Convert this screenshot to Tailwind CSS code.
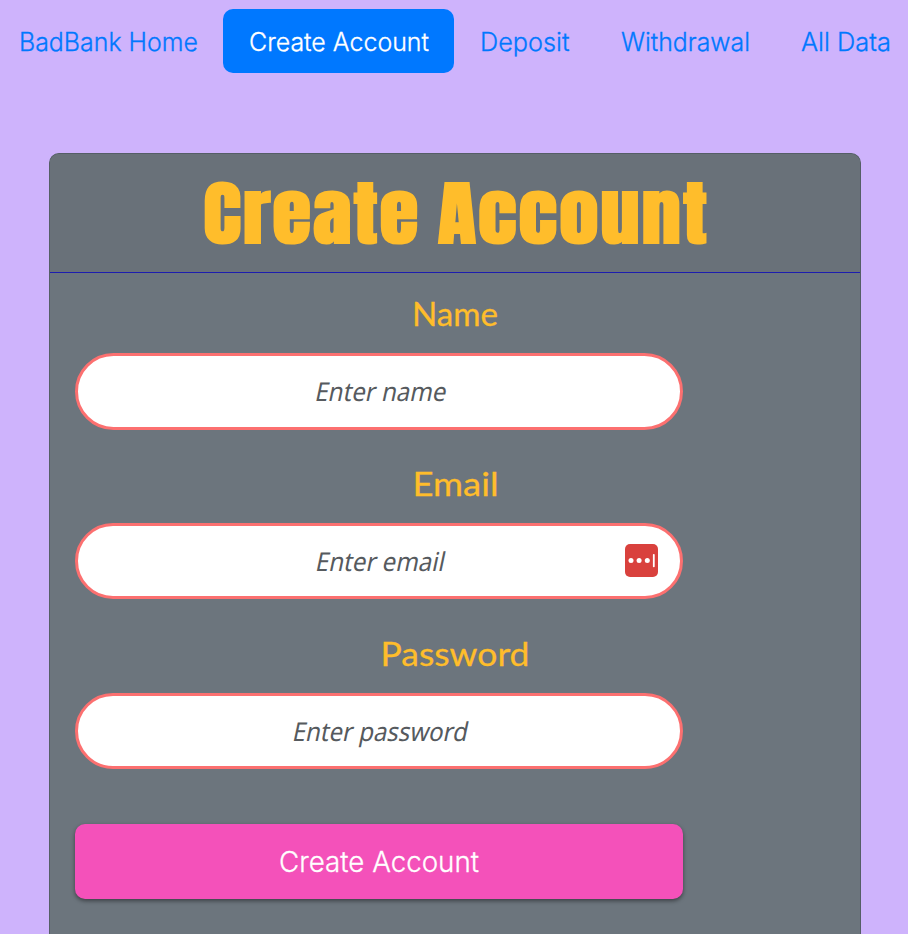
<!DOCTYPE html>
<html lang="en"><head><meta charset="utf-8"><title>BadBank</title>
<script src="https://cdn.jsdelivr.net/npm/@tailwindcss/browser@4"></script></head>
<body class="bg-[#ceb3fc] h-[934px] overflow-hidden font-['Inter',sans-serif]">
<nav class="flex pt-[9px] h-[73px] pl-[19px] text-[25.5px] font-light text-[#0078ff] whitespace-nowrap">
<a class="w-[204px]"><svg class="block w-full h-16" fill="currentColor" stroke="currentColor" stroke-width="0.3"><text x="0" y="42" textLength="179" lengthAdjust="spacingAndGlyphs">BadBank Home</text></svg></a>
<a class="w-[231px] h-16 rounded-[10px] bg-[#0078ff] text-white"><svg class="block w-full h-16" fill="currentColor" stroke="currentColor" stroke-width="0.3"><text x="26" y="42" textLength="180" lengthAdjust="spacingAndGlyphs">Create Account</text></svg></a>
<a class="w-[141px] pl-[26px]"><svg class="block w-full h-16" fill="currentColor" stroke="currentColor" stroke-width="0.3"><text x="0" y="42" textLength="89.5" lengthAdjust="spacingAndGlyphs">Deposit</text></svg></a>
<a class="w-[180px] pl-[26px]"><svg class="block w-full h-16" fill="currentColor" stroke="currentColor" stroke-width="0.3"><text x="0" y="42" textLength="129" lengthAdjust="spacingAndGlyphs">Withdrawal</text></svg></a>
<a class="w-[133px] pl-[26px]"><svg class="block w-full h-16" fill="currentColor" stroke="currentColor" stroke-width="0.3"><text x="0" y="42" textLength="90" lengthAdjust="spacingAndGlyphs">All Data</text></svg></a>
</nav>
<main class="mt-20 ml-[49px] w-[812px] h-[781px] border border-b-0 border-[#555e66] rounded-t-[10px] bg-[#6c757d] overflow-hidden">
<h1 class="h-[119px] bg-[#697179] border-b border-[#1d1dae] text-[#ffbd2b] font-['Impact','Anton','Roboto',sans-serif] font-bold text-[70px] tracking-[2px]">
<svg class="block w-full h-[118px]" fill="currentColor"><text x="153.5" y="89" textLength="217" lengthAdjust="spacingAndGlyphs">Create</text><text x="388" y="89" textLength="271" lengthAdjust="spacingAndGlyphs">Account</text></svg></h1>
<form class="px-[25px]">
<div class="h-[170px]">
<label class="block h-20 text-[#ffbd2b] font-['Papyrus','Lato',sans-serif] text-[33px]"><svg class="block w-full h-20" fill="currentColor" stroke="currentColor" stroke-width="0.3"><text x="337" y="53" textLength="86" lengthAdjust="spacingAndGlyphs">Name</text></svg></label>
<div class="w-[608px] h-[77px] rounded-full border-[3px] border-[#fc7070] bg-white text-[#565a5e] font-['Noto_Sans',sans-serif] text-[26px]"><svg class="block w-full h-[71px]" fill="currentColor"><text transform="translate(236 45) skewX(-12)" textLength="131" lengthAdjust="spacingAndGlyphs">Enter name</text></svg></div>
</div>
<div class="h-[170px]">
<label class="block h-20 text-[#ffbd2b] font-['Papyrus','Lato',sans-serif] text-[33px]"><svg class="block w-full h-20" fill="currentColor" stroke="currentColor" stroke-width="0.3"><text x="337.5" y="53" textLength="86" lengthAdjust="spacingAndGlyphs">Email</text></svg></label>
<div class="relative w-[608px] h-[76px] rounded-full border-[3px] border-[#fc7070] bg-white text-[#565a5e] font-['Noto_Sans',sans-serif] text-[26px]"><svg class="block w-full h-[70px]" fill="currentColor"><text transform="translate(236.5 45) skewX(-12)" textLength="129" lengthAdjust="spacingAndGlyphs">Enter email</text></svg>
<svg class="absolute left-[547px] top-[18px] w-[33px] h-[33px]" viewBox="0 0 33 33"><rect width="33" height="33" rx="5" fill="#d9413d"/><g fill="white"><circle cx="6" cy="16.6" r="2.5"/><circle cx="14.1" cy="16.6" r="2.5"/><circle cx="22.3" cy="16.6" r="2.5"/><rect x="27.9" y="10" width="1.8" height="13.2" rx=".8"/></g></svg></div>
</div>
<div class="h-[170px]">
<label class="block h-20 text-[#ffbd2b] font-['Papyrus','Lato',sans-serif] text-[33px]"><svg class="block w-full h-20" fill="currentColor" stroke="currentColor" stroke-width="0.3"><text x="305.5" y="53" textLength="149" lengthAdjust="spacingAndGlyphs">Password</text></svg></label>
<div class="w-[608px] h-[76px] rounded-full border-[3px] border-[#fc7070] bg-white text-[#565a5e] font-['Noto_Sans',sans-serif] text-[26px]"><svg class="block w-full h-[70px]" fill="currentColor"><text transform="translate(213.5 45) skewX(-12)" textLength="175" lengthAdjust="spacingAndGlyphs">Enter password</text></svg></div>
</div>
<button type="button" class="block mt-[41px] w-[608px] h-[75px] rounded-[10px] bg-[#f451ba] text-white text-[28.5px] font-light shadow-[0_2px_4px_rgba(0,0,0,0.45)]"><svg class="block w-full h-[75px]" fill="currentColor" stroke="currentColor" stroke-width="0.3"><text x="204" y="48" textLength="200" lengthAdjust="spacingAndGlyphs">Create Account</text></svg></button>
</form></main></body></html>
